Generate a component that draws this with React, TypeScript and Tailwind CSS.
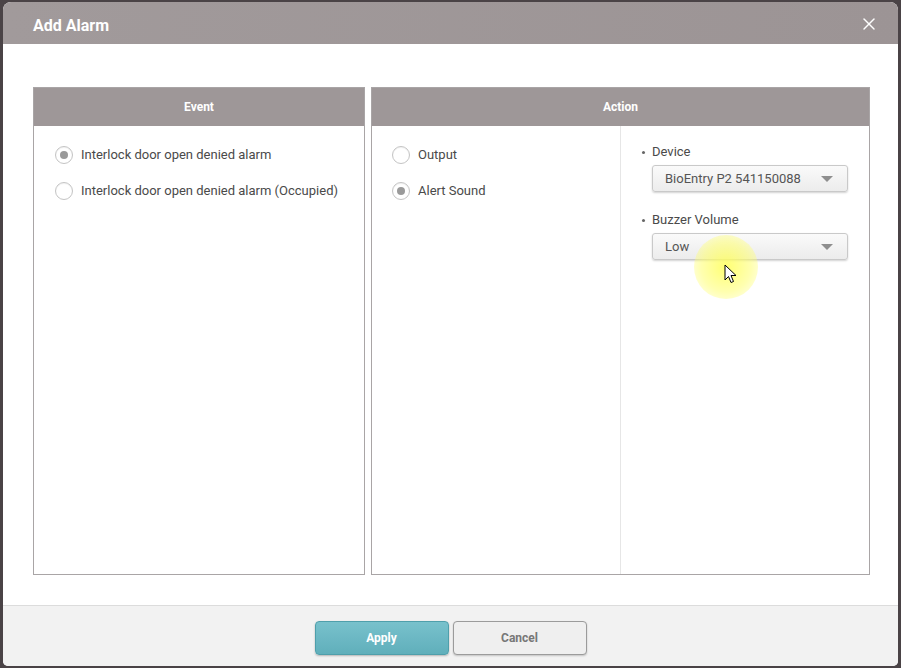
import { X } from "lucide-react";

function Radio({ checked, label }: { checked?: boolean; label: string }) {
  return (
    <label className="flex items-center gap-[8px] h-[18px]">
      <span className="w-[18px] h-[18px] rounded-full border border-[#c4c4c4] bg-white flex items-center justify-center shadow-[inset_0_1px_1px_rgba(0,0,0,0.06)]">
        {checked && <span className="w-[8px] h-[8px] rounded-full bg-[#9a9a9a]" />}
      </span>
      <span className="text-[13px] text-[#4a4a4a]">{label}</span>
    </label>
  );
}

function Select({ value }: { value: string }) {
  return (
    <div className="w-[196px] h-[27px] flex items-center justify-between pl-[12px] pr-[14px] rounded-[3px] border border-[#c9c9c9] bg-gradient-to-b from-[#fafafa] to-[#ececec] shadow-[0_1px_2px_rgba(0,0,0,0.18)]">
      <span className="text-[13px] text-[#555]">{value}</span>
      <span className="w-0 h-0 border-l-[6px] border-r-[6px] border-t-[6px] border-l-transparent border-r-transparent border-t-[#8e8e8e]" />
    </div>
  );
}

export default function App() {
  return (
    <div
      className="w-[901px] h-[668px] bg-[#4a4346] pt-[2px] px-[3px] overflow-hidden"
      style={{ fontFamily: "Roboto, 'Liberation Sans', sans-serif" }}
    >
      <div className="relative w-[895px] h-[664px] flex flex-col rounded-t-[8px] rounded-b-[5px] overflow-hidden bg-white">
        <div className="h-[42px] shrink-0 flex items-center justify-between pt-[5px] pl-[30px] pr-[19px] bg-gradient-to-r from-[#a19a9b] to-[#9c9495]">
          <span className="text-white text-[16px] font-bold">Add Alarm</span>
          <X className="w-[20px] h-[20px] text-white -mt-[3px]" strokeWidth={1.75} />
        </div>

        <div className="flex-1 flex gap-[6px] pt-[43px] pl-[30px] pr-[28px] pb-[30px]">
          <div className="w-[332px] flex flex-col border border-[#a9a5a6]">
            <div className="h-[38px] shrink-0 flex items-center justify-center bg-[#9e9798] text-white text-[12px] font-bold">
              Event
            </div>
            <div className="flex flex-col gap-[18px] pt-[20px] pl-[21px]">
              <Radio checked label="Interlock door open denied alarm" />
              <Radio label="Interlock door open denied alarm (Occupied)" />
            </div>
          </div>

          <div className="flex-1 flex flex-col border border-[#a9a5a6]">
            <div className="h-[38px] shrink-0 flex items-center justify-center bg-[#9e9798] text-white text-[12px] font-bold">
              Action
            </div>
            <div className="flex-1 flex">
              <div className="w-[249px] border-r border-[#e6e6e6] flex flex-col gap-[18px] pt-[20px] pl-[20px]">
                <Radio label="Output" />
                <Radio checked label="Alert Sound" />
              </div>
              <div className="flex-1 flex flex-col pt-[18px] pl-[21px]">
                <div className="flex items-center gap-[7px] h-[16px] text-[13px] text-[#4a4a4a]">
                  <span className="w-[3px] h-[3px] rounded-full bg-[#666]" />
                  Device
                </div>
                <div className="mt-[5px] ml-[10px]">
                  <Select value="BioEntry P2 541150088" />
                </div>
                <div className="mt-[20px] flex items-center gap-[7px] h-[16px] text-[13px] text-[#4a4a4a]">
                  <span className="w-[3px] h-[3px] rounded-full bg-[#666]" />
                  Buzzer Volume
                </div>
                <div className="mt-[5px] ml-[10px]">
                  <Select value="Low" />
                </div>
              </div>
            </div>
          </div>
        </div>

        <div className="h-[61px] shrink-0 flex items-start justify-center gap-[4px] pt-[15px] bg-[#f2f2f2] border-t border-[#dcdcdc]">
          <button className="w-[134px] h-[34px] rounded-[4px] border border-[#4f9fab] bg-gradient-to-b from-[#78c1cc] to-[#60afbb] text-white text-[12px] font-bold shadow-[0_1px_2px_rgba(0,0,0,0.25)]">
            Apply
          </button>
          <button className="w-[134px] h-[34px] rounded-[4px] border border-[#9b9b9b] bg-[#efefef] text-[#777] text-[12px] font-bold shadow-[0_1px_2px_rgba(0,0,0,0.2)]">
            Cancel
          </button>
        </div>

        <div className="absolute left-[691px] top-[233px] w-[64px] h-[64px] rounded-full bg-[radial-gradient(circle,rgba(255,255,90,0.85)_0%,rgba(255,255,110,0.55)_55%,rgba(255,255,150,0)_100%)] pointer-events-none" />
        <svg className="absolute left-[721px] top-[262px]" width="13" height="20" viewBox="0 0 13 20">
          <path d="M1 1 L1 16 L4.5 12.5 L7 18.5 L9.5 17.5 L7 11.5 L12 11.5 Z" fill="white" stroke="black" strokeWidth="1" strokeLinejoin="round" />
        </svg>
      </div>
    </div>
  );
}
